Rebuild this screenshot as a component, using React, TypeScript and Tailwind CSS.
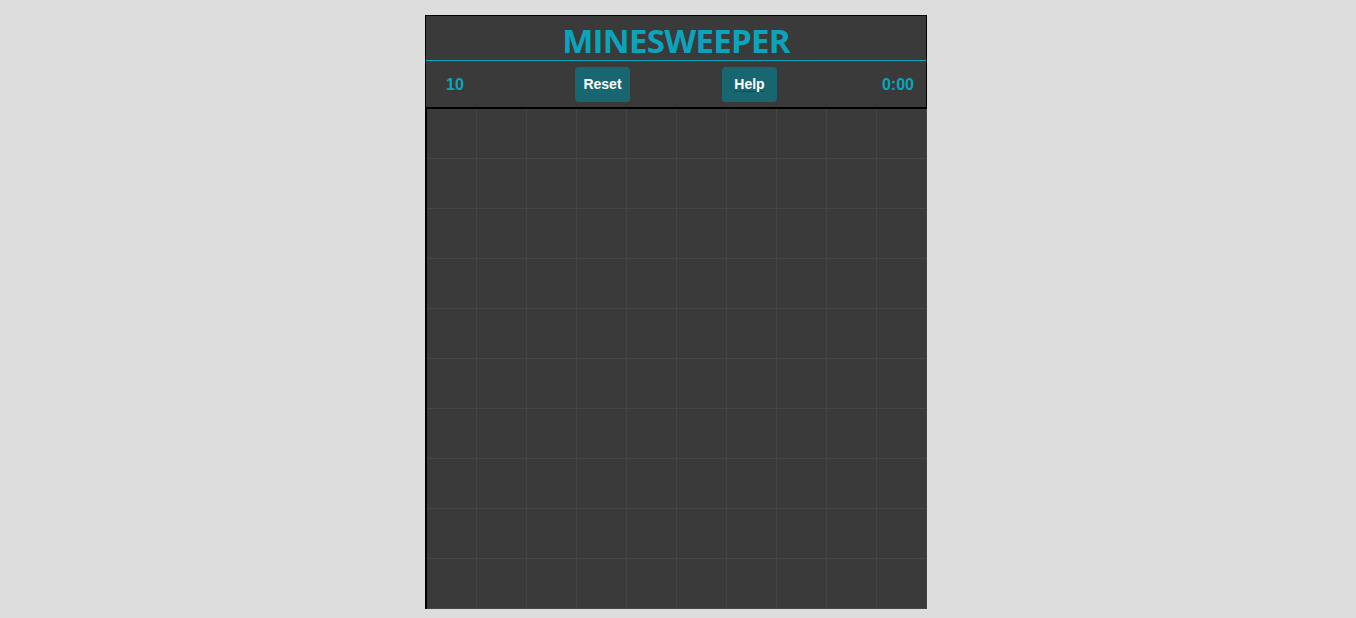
const ROWS = 10;
const COLS = 10;

export default function App() {
  const cells = Array.from({ length: ROWS * COLS }, (_, i) => i);

  return (
    <div className="min-h-screen bg-[#dddddd] pt-[15px] pr-[4px] flex justify-center">
      <div className="w-[502px] h-fit border border-black border-b-0 bg-[#3a3a3a]">
        <div className="h-[45px] flex items-center justify-center border-b border-[#0aa5bd]">
          <h1 className="text-[33px] leading-none font-bold tracking-[-0.7px] text-[#0aa5bd] font-['Open_Sans',sans-serif] pt-[4px]">
            MINESWEEPER
          </h1>
        </div>

        <div className="h-[47px] grid grid-cols-[1fr_auto_1fr] items-center border-b border-black font-['Liberation_Sans',Arial,sans-serif] font-bold">
          <span className="pl-[20px] pt-[2px] text-[16px] text-[#0aa5bd]">10</span>
          <div className="flex gap-[92px] pt-[1px]">
            <button className="w-[55px] h-[35px] rounded-[4px] bg-[#186770] text-white text-[14px] font-bold">
              Reset
            </button>
            <a
              href="#"
              className="w-[55px] h-[35px] rounded-[4px] bg-[#186770] text-white text-[14px] font-bold flex items-center justify-center"
            >
              <span className="underline decoration-[#551a8b] underline-offset-[2px]">Help</span>
            </a>
          </div>
          <span className="pr-[12px] pt-[2px] text-right text-[16px] text-[#0aa5bd]">0:00</span>
        </div>

        <div className="grid grid-cols-[repeat(10,50px)] border-l border-t border-black">
          {cells.map((i) => (
            <div
              key={i}
              className="h-[50px] border-r border-b border-[#454545] bg-[#3a3a3a]"
            />
          ))}
        </div>
      </div>
    </div>
  );
}
